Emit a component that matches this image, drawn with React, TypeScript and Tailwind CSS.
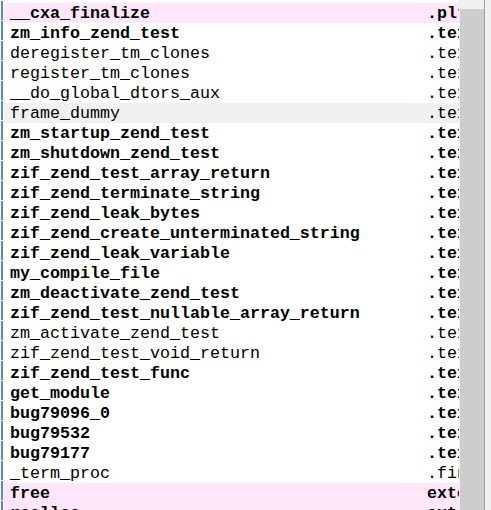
import React from "react";

type Row = { n: string; s: string; b?: boolean; bg?: "pink" | "gray" };

const rows: Row[] = [
  { n: "__cxa_finalize", s: ".plt", b: true, bg: "pink" },
  { n: "zm_info_zend_test", s: ".text", b: true },
  { n: "deregister_tm_clones", s: ".text" },
  { n: "register_tm_clones", s: ".text" },
  { n: "__do_global_dtors_aux", s: ".text" },
  { n: "frame_dummy", s: ".text", bg: "gray" },
  { n: "zm_startup_zend_test", s: ".text", b: true },
  { n: "zm_shutdown_zend_test", s: ".text", b: true },
  { n: "zif_zend_test_array_return", s: ".text", b: true },
  { n: "zif_zend_terminate_string", s: ".text", b: true },
  { n: "zif_zend_leak_bytes", s: ".text", b: true },
  { n: "zif_zend_create_unterminated_string", s: ".text", b: true },
  { n: "zif_zend_leak_variable", s: ".text", b: true },
  { n: "my_compile_file", s: ".text", b: true },
  { n: "zm_deactivate_zend_test", s: ".text", b: true },
  { n: "zif_zend_test_nullable_array_return", s: ".text", b: true },
  { n: "zm_activate_zend_test", s: ".text" },
  { n: "zif_zend_test_void_return", s: ".text" },
  { n: "zif_zend_test_func", s: ".text", b: true },
  { n: "get_module", s: ".text", b: true },
  { n: "bug79096_0", s: ".text", b: true },
  { n: "bug79532", s: ".text", b: true },
  { n: "bug79177", s: ".text", b: true },
  { n: "_term_proc", s: ".fini" },
  { n: "free", s: "extern", b: true, bg: "pink" },
  { n: "realloc", s: "extern", b: true, bg: "pink" },
];

export default function App() {
  return (
    <div
      className="flex h-[510px] w-[491px] overflow-hidden bg-white text-black"
      style={{ fontFamily: '"Liberation Mono", "DejaVu Sans Mono", monospace' }}
    >
      <div className="flex w-[459px] shrink-0 flex-col overflow-hidden pt-[3px]">
        {rows.map((r, i) => (
          <div key={i} className="flex h-[20px] shrink-0 items-start">
            <span className="ml-[1px] mt-[-2px] h-[19px] w-[2px] shrink-0 bg-[#5a84dc]" />
            <div
              className={
                "ml-[1px] flex h-[20px] w-[455px] shrink-0 items-start overflow-hidden whitespace-nowrap text-[16.67px] leading-[22px] " +
                (r.b ? "font-bold " : "font-normal ") +
                (r.bg === "pink"
                  ? "bg-[#ffe6fb]"
                  : r.bg === "gray"
                  ? "bg-[#f0f0f0]"
                  : "bg-white")
              }
            >
              <div className="w-[423px] shrink-0 overflow-hidden pl-[6px]">{r.n}</div>
              <div className="flex-1 overflow-hidden">{r.s}</div>
            </div>
          </div>
        ))}
      </div>
      <div className="flex w-[32px] shrink-0 bg-[#f0f0f0]">
        <div className="flex w-[25px] flex-col">
          <div className="h-[9px] shrink-0" />
          <div className="ml-[1px] w-[24px] flex-1 bg-[#cdcdcd]" />
        </div>
        <div className="w-[1px] bg-[#a0a0a0]" />
        <div className="flex-1" />
      </div>
    </div>
  );
}
